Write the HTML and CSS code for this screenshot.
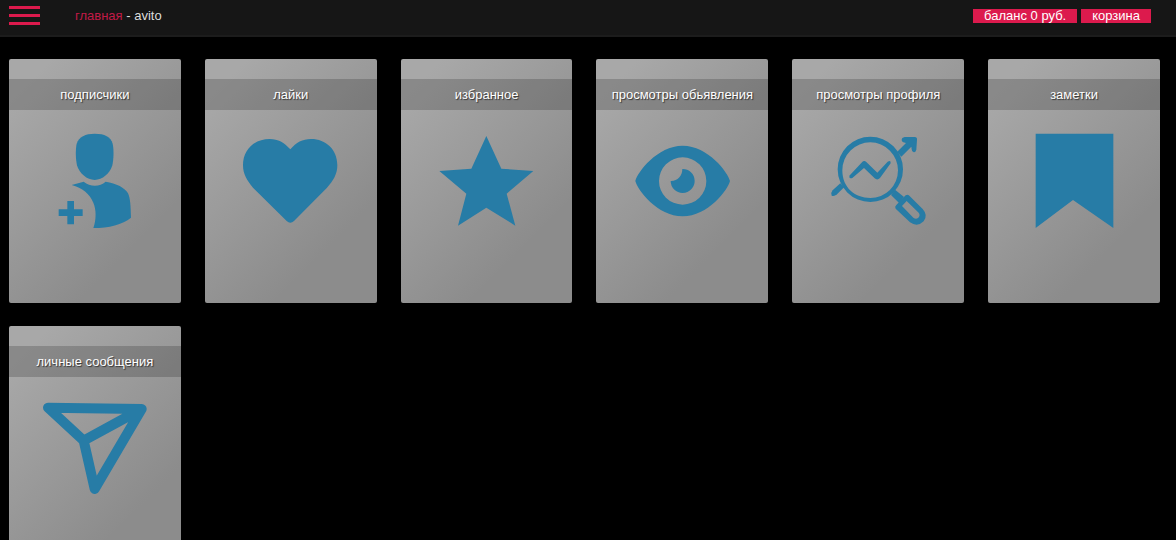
FILE: index.html
```html
<!DOCTYPE html>
<html lang="ru">
  <head>
    <meta charset="UTF-8" />
    <meta name="viewport" content="width=device-width, initial-scale=1.0" />
    <title>avito</title>
    <link rel="stylesheet" href="styles.css">
  </head>
  <body>
    <header class="header">
      <button type="button" class="burger" aria-label="меню">
        <span></span>
        <span></span>
        <span></span>
      </button>
      <nav class="crumbs"><a href="#">главная</a> - avito</nav>
      <div class="account">
        <a class="tag" href="#">баланс 0 руб.</a>
        <a class="tag" href="#">корзина</a>
      </div>
    </header>

    <main class="cards">
      <a class="card" href="#">
        <h2>подписчики</h2>
        <svg class="icon" viewBox="-15 0 360 360">
          <path d="M164 41C194 41 212 50 218 71C222 89 221 118 217 136C210 160 187 180 164 180C141 180 118 160 111 136C107 118 106 89 110 71C117 50 136 41 164 41Z" />
          <path d="M95 195L131 185C150 201 179 202 197 185C229 190 255 203 264 220C271 234 272 258 273 293C247 314 207 324 160 324C169 298 169 269 160 248C149 222 127 203 95 195Z" />
          <path d="M82 243H102V268H128V288H102V313H82V288H56V268H82Z" />
        </svg>
      </a>
      <a class="card" href="#">
        <h2>лайки</h2>
        <svg class="icon" viewBox="3 0 360 360">
          <path d="M181 88C162 67 145 57 119 57C73 57 39 89 39 136C39 162 51 182 69 203L170 303Q181 313 192 303L291 203C310 183 322 162 322 136C322 89 288 57 243 57C217 57 199 67 181 88Z" />
        </svg>
      </a>
      <a class="card" href="#">
        <h2>избранное</h2>
        <svg class="icon" viewBox="-9 0 360 360">
          <path d="M169 48L214 146L310 153L230 221L256 317L169 263L84 317L109 221L28 153L124 146Z" />
        </svg>
      </a>
      <a class="card" href="#">
        <h2>просмотры обьявления</h2>
        <svg class="icon" viewBox="6 0 360 360">
          <path fill-rule="evenodd" d="M46 183C52 157 112 77 188 77C264 77 324 157 330 183C324 209 264 289 188 289C112 289 52 209 46 183ZM188 112A71 71 0 1 0 188 254A71 71 0 1 0 188 112Z" />
          <path d="M187 147A36 36 0 1 1 152 183C172 184 187 168 187 147Z" />
        </svg>
      </a>
      <a class="card" href="#">
        <h2>просмотры профиля</h2>
        <svg class="icon" viewBox="-6 0 360 360">
          <path fill-rule="evenodd" d="M151 50A98 98 0 1 1 151 246A98 98 0 1 1 151 50ZM151 67A84 84 0 0 0 67 151C67 203 104 234 151 234A83 83 0 0 0 234 151A84 84 0 0 0 151 67Z" />
          <path d="M88 167L126 127Q132 119 139 126L172 158L203 125Q213 119 212 130L180 174Q172 182 164 175L132 144L97 174Q87 178 88 167Z" />
          <path d="M231 96L258 69L250 67Q242 62 247 54L254 51H284Q292 51 291 59L289 89Q287 97 281 97Q275 96 275 88L274 80L244 110Z" />
          <path d="M61 190L73 201L51 223Q42 231 35 227Q31 219 38 211Z" />
          <path d="M225 209L252 231L238 250L213 225Z" />
          <path fill-rule="evenodd" d="M257 226Q263 222 268 227L308 267Q325 286 311 304Q292 323 270 307L227 266Q223 260 229 255ZM260 243L246 258L280 293Q288 299 295 293Q302 286 296 278Z" />
        </svg>
      </a>
      <a class="card" href="#">
        <h2>заметки</h2>
        <svg class="icon" viewBox="-18 0 360 360">
          <path d="M47 41H280V324L159 240L47 324Z" />
        </svg>
      </a>
      <a class="card" href="#">
        <h2>личные сообщения</h2>
        <svg class="icon icon-line" viewBox="15 -9 360 360">
          <path d="M54 53L335 57L194 297L161 152ZM161 152L335 57" />
        </svg>
      </a>
    </main>
  </body>
</html>
```

FILE: styles.css
```css
* {
  box-sizing: border-box;
}
body {
  margin: 0;
  background: #000;
  color: #ddd;
  font-family: "Liberation Sans", Arial, sans-serif;
  font-size: 13px;
  line-height: 16px;
}
a {
  color: inherit;
  text-decoration: none;
}
.header {
  display: flex;
  align-items: flex-start;
  height: 37px;
  padding: 6px 25px 0 9px;
  background: #161616;
  border-bottom: 2px solid #1c1c1c;
}
.burger {
  display: flex;
  flex-direction: column;
  gap: 5px;
  width: 31px;
  padding: 0;
  background: none;
  border: 0;
  cursor: pointer;
}
.burger span {
  width: 100%;
  height: 3px;
  background: #dc1a4d;
}
.crumbs {
  margin: 2px auto 0 35px;
}
.crumbs a {
  color: #c21a47;
}
.account {
  display: flex;
  gap: 4px;
  padding-top: 3px;
}
.tag {
  padding: 0 11px;
  background: #dc1a4d;
  color: #fff;
  line-height: 14px;
}
.cards {
  display: grid;
  grid-template-columns: repeat(6, 1fr);
  gap: 23px 24px;
  padding: 22px 16px 22px 9px;
}
.card {
  height: 244px;
  padding-top: 20px;
  border-radius: 2px;
  background: linear-gradient(135deg, #a8a8a8 10%, #8c8c8c 75%);
  text-align: center;
}
.card h2 {
  margin: 0 0 10px;
  padding: 8px 0;
  background: rgba(0, 0, 0, 0.18);
  color: #fff;
  font-size: 13px;
  font-weight: normal;
  line-height: 15px;
  text-shadow: 1px 1px 1px #333;
}
.icon {
  width: 120px;
  height: 120px;
  fill: #277ca6;
}
.icon-line {
  fill: none;
  stroke: #277ca6;
  stroke-width: 30;
  stroke-linecap: round;
  stroke-linejoin: round;
}
```
